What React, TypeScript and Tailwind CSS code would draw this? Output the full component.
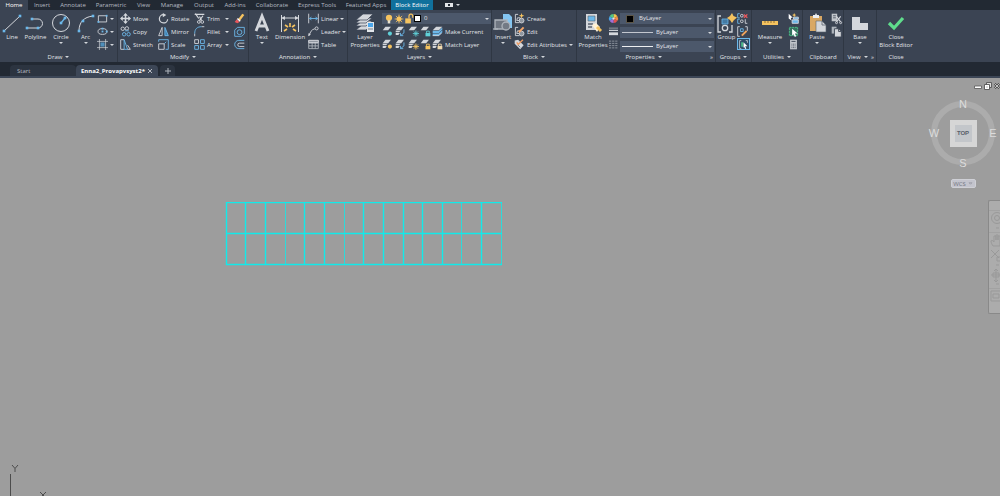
import { type ReactNode } from 'react'
import clsx from 'clsx'

const BLUE = '#6cb8ea'
const GREY = '#d4d7dc'
const GOLD = '#f5c35f'
const TEAL = '#5fd0d8'

interface IconProps {
  children: ReactNode
  className?: string
  box?: number
}

function Icon({ children, className = 'size-[11px]', box = 16 }: IconProps) {
  return (
    <svg
      viewBox={`0 0 ${box} ${box}`}
      className={clsx('shrink-0 overflow-visible', className)}
      fill="none"
      stroke={GREY}
      strokeWidth={1.3}
      aria-hidden="true"
    >
      {children}
    </svg>
  )
}

function Caret({ className }: { className?: string }) {
  return (
    <svg viewBox="0 0 4 2" className={clsx('w-1 h-[2px] shrink-0', className)} fill="#d4d7dc" aria-hidden="true">
      <path d="M0 0h4L2 2z" />
    </svg>
  )
}

/* ---------- small icons, 16 unit box ---------- */

const dot = (x: number, y: number) => <rect key={`${x}-${y}`} x={x - 1.3} y={y - 1.3} width="2.6" height="2.6" fill={BLUE} stroke="none" />

const RectIcon = () => <Icon><path d="M2 4h12v9H2z" />{dot(2, 13)}{dot(14, 4)}</Icon>
const EllipseIcon = () => <Icon><ellipse cx="8" cy="8" rx="6.5" ry="4.2" />{dot(8, 8)}{dot(8, 3.8)}{dot(14, 8)}</Icon>
const HatchIcon = () => <Icon><path d="M3.500 0v16M12.500 0v16M0 3.500h16M0 12.500h16" strokeWidth="1" /><path d="M5 5h6v6H5z" fill="#4f8fbb" stroke="none" /></Icon>
const MoveIcon = () => (
  <Icon><path d="M8 2v12M2 8h12" strokeWidth="2.200" /><path d="M8 0l3.500 4h-7zM8 16l3.500-4h-7zM0 8l4-3.500v7zM16 8l-4-3.500v7z" fill={GREY} stroke="none" /></Icon>
)
const CopyIcon = () => (
  <Icon><circle cx="4" cy="4" r="2.500" /><circle cx="10" cy="3.500" r="2.500" /><circle cx="6" cy="12" r="2.500" stroke={BLUE} /><circle cx="12.500" cy="12" r="2.500" stroke={BLUE} /><path d="M7 7h6" stroke={BLUE} /></Icon>
)
const StretchIcon = () => <Icon><path d="M6 1H1v14h5" /><path d="M6 15V1l5 14z" stroke={BLUE} /><path d="M11 9l4 6h-4" /></Icon>
const RotateIcon = () => <Icon><path d="M8 2.500A6 6 0 1 0 14 9" strokeWidth="1.800" /><path d="M7 0l5 3-5 3z" fill={GREY} stroke="none" /></Icon>
const MirrorIcon = () => <Icon><path d="M6 2v12H1z" /><path d="M10 2v12h5z" stroke={BLUE} fill="#3f7fb0" /></Icon>
const ScaleIcon = () => <Icon><path d="M1 4V1h14v14h-4" stroke={BLUE} /><path d="M1 7h8v8H1z" /><path d="M9 7l3-3" stroke={BLUE} /></Icon>
const TrimIcon = () => (
  <Icon><path d="M1 2h14M8 5l3 6M13 4L8 11" strokeWidth="1.800" /><path d="M2 1l5 7" strokeWidth="1.800" /><circle cx="7" cy="13" r="2" /><circle cx="12" cy="13" r="2" /></Icon>
)
const FilletIcon = () => <Icon><path d="M1 15v-4M11 1h4" /><path d="M1 11C1 4 5 1 11 1" stroke={BLUE} /></Icon>
const ArrayIcon = () => (
  <Icon><path d="M1 1h5.500v5.500H1z" /><path d="M9.500 1H15v5.500H9.500zM1 9.500h5.500V15H1zM9.500 9.500H15V15H9.500z" stroke={BLUE} /></Icon>
)
const EraseIcon = () => (
  <Icon><path d="M6 9l6-8 3 2-6 8z" fill={GOLD} stroke="none" /><path d="M4 9l4 4-3 2-4-2z" fill="#e9575c" stroke="none" /><path d="M5 8l4 4" stroke="#fff" strokeWidth="2" /></Icon>
)
const ExplodeIcon = () => <Icon><path d="M1 6l4-4h10v9l-4 4H1z" stroke={BLUE} /><circle cx="8" cy="9" r="3.500" stroke={BLUE} /></Icon>
const OffsetIcon = () => <Icon><path d="M15 2H7a6 6 0 0 0 0 12h8" stroke={BLUE} /><path d="M15 6H8a2.500 2.500 0 0 0 0 5h7" /></Icon>
const LinearIcon = () => <Icon><path d="M1 1v14M15 1v14" /><path d="M3 8h10M5 6L2 8l3 2M11 6l3 2-3 2" stroke={BLUE} /></Icon>
const LeaderIcon = () => <Icon><path d="M2 14C3 9 5 5 10 4" /><circle cx="12.500" cy="3.500" r="2.200" /><path d="M0 15l1-5 3 2z" fill={GREY} stroke="none" /></Icon>
const TableIcon = () => <Icon><path d="M1 2h14v12H1zM1 6h14M1 10h14M6 3v11M10.500 3v11" stroke="#aeb4bc" /><path d="M1 2h14v3H1z" fill="#8f969f" /></Icon>

function LayerIcon({ accent, shape, stacked }: { accent: string; shape: 'dot' | 'arrow' | 'lock' | 'sun'; stacked?: boolean }) {
  return (
    <Icon>
      <path d="M5 1h8L9 6H1z" fill={GREY} stroke="none" />
      {stacked && <path d="M1 7h7l-2 2H1zM1 10h6l-2 3H1z" fill={GREY} stroke="none" />}
      {shape === 'dot' && <circle cx="11.5" cy="11" r="3" fill={accent} stroke="none" />}
      {shape === 'arrow' && <path d="M13 5v5l-5 4M8 10v4h4" stroke={accent} />}
      {shape === 'lock' && <><path d="M8 10h7v5H8z" fill={accent} stroke="none" /><path d="M9.500 10V7.500h4V10" stroke={accent} /></>}
      {shape === 'sun' && <path d="M11.500 6.500v9M7 11h9M8.500 8l6 6M14.500 8l-6 6" stroke={accent} />}
    </Icon>
  )
}

const LayerStackIcon = ({ color }: { color: string }) => (
  <Icon><path d="M6 1h9l-5 5H1z" fill={GREY} stroke="none" /><path d="M1 7h9l5-5v3l-5 5H1zM1 11h9l5-5v3l-5 5H1z" fill={color} stroke="none" /><path d="M1 14h9l4-4" /></Icon>
)
const BulbIcon = () => <Icon className="size-[10px]"><circle cx="8" cy="6" r="5" fill={GOLD} stroke="none" /><path d="M6 10h4v5H6z" fill="#e8e0cc" stroke="none" /></Icon>
const SunIcon = () => <Icon className="size-[10px]"><circle cx="8" cy="8" r="4" fill={GOLD} stroke="none" /><path d="M8 1v14M1 8h14M3 3l10 10M13 3L3 13" stroke={GOLD} /></Icon>
const UnlockIcon = () => <Icon className="size-[10px]"><path d="M2 7h9v8H2z" fill={GOLD} stroke="none" /><path d="M8 7V3a3 3 0 0 1 6 0v3" stroke={GOLD} strokeWidth="2" /></Icon>

const BlockIcon = ({ pencil }: { pencil?: boolean }) => (
  <Icon>
    <path d="M2 2v12h6M2 2h4M4 11h5V7H5z" /><circle cx="11" cy="11" r="3.500" fill="#8f969f" />
    {pencil
      ? <path d="M6 8l7-7 2 2-7 7z" fill="#f3a66a" stroke="none" />
      : <path d="M11 0l1 3 3 1-3 1-1 3-1-3-3-1 3-1z" fill={GOLD} stroke="none" />}
  </Icon>
)
const AttributeIcon = () => <Icon><path d="M1 2l5-1 8 8-5 6-8-8z" fill={GREY} stroke="none" /><path d="M4 5l2 3 7-7" stroke="#ef9c62" strokeWidth="2" /><path d="M6 9l3 3" stroke="#59616d" /></Icon>
const WheelIcon = () => (
  <Icon className="size-[9px]">
    <g stroke="none">
      <path d="M8 8V0a8 8 0 0 1 7 4z" fill="#f0c64a" /><path d="M8 8l7-4a8 8 0 0 1 0 8z" fill="#f08a45" />
      <path d="M8 8l7 4a8 8 0 0 1-7 4z" fill="#e2504f" /><path d="M8 8v8a8 8 0 0 1-7-4z" fill="#a26fd6" />
      <path d="M8 8l-7 4a8 8 0 0 1 0-8z" fill="#4ba5ea" /><path d="M8 8L1 4a8 8 0 0 1 7-4z" fill="#55c784" />
      <circle cx="8" cy="8" r="2" fill="#dfe3e6" />
    </g>
  </Icon>
)
const WeightIcon = () => <Icon className="size-[9px]"><path d="M0 2h16" strokeWidth="1" /><path d="M0 6h16" strokeWidth="2" /><path d="M0 12h16" strokeWidth="5" /></Icon>
const DashIcon = () => <Icon className="size-[9px]"><path d="M0 2h16M0 6h16M0 10h16M0 14h16" stroke="#a5abb4" strokeDasharray="4 1.500" /></Icon>
const UngroupIcon = () => <Icon><path d="M4 1H1v6h3M4 9H1v6h3" stroke={BLUE} /><circle cx="7" cy="4" r="2" /><circle cx="7" cy="12" r="2" /><path d="M10 2l5 5M15 2l-5 5" stroke="#e9575c" strokeWidth="2" /><path d="M12 9v6h3" /></Icon>
const GroupEditIcon = () => <Icon><path d="M4 1H1v14h3" /><path d="M12 1h3v6" /><path d="M5 4h4v4H5z" stroke={BLUE} /><path d="M6 13l7-7 2 2-7 7z" fill="#f0a55c" stroke="none" /></Icon>
const GroupSelectIcon = () => <Icon className="size-[9px]"><path d="M4 1H1v14h3M12 1h3v4" /><path d="M4 4h3v8H4z" fill="#4fc58a" stroke="none" /><path d="M8 4l7 7H11l2 4-2 1-2-4-1 2z" fill="#fff" stroke="none" /></Icon>
const QuickSelectIcon = () => <Icon><path d="M1 1l6 6H4l1 4-4-3z" fill="#fff" stroke="none" /><path d="M8 6h7v3H8zM6 10h9v5H6z" fill={BLUE} stroke={GREY} /><path d="M9 0l1 2 2 1-2 1-1 2-1-2-2-1 2-1z" fill={GOLD} stroke="none" /></Icon>
const SelectAllIcon = () => <Icon><path d="M2 2h12v12H2z" stroke="#4fc58a" strokeDasharray="3 1" fill="#36725f" /><path d="M6 4l8 7h-4l2 4-2 1-2-4-2 2z" fill="#fff" stroke="none" /></Icon>
const CalculatorIcon = () => <Icon><path d="M3 1h10v14H3z" fill="#c2c6cc" stroke="none" /><path d="M5 3.500h6" stroke="#4b5462" strokeWidth="1.500" /><path d="M5 7.500h6M5 10h6M5 12.500h6" stroke="#4b5462" strokeWidth="1.200" strokeDasharray="1.400 0.900" /></Icon>
const CutIcon = () => <Icon><path d="M1 1h8v11H1z" fill="#c2c6cc" stroke="none" /><path d="M3 4h4M3 7h4" stroke="#4b5462" /><path d="M8 5l6 8M14 5l-6 8" strokeWidth="1.600" /><circle cx="8" cy="14" r="1.500" /><circle cx="14" cy="14" r="1.500" /></Icon>
const CopyClipIcon = () => <Icon><path d="M1 1h7v10H1z" fill="#aeb4bc" stroke="none" /><path d="M5 4h6l4 4v8H5z" fill={GREY} stroke="#3b4453" /><path d="M11 4v4h4" stroke="#3b4453" /></Icon>

/* ---------- large icons, 20 unit box ---------- */

function Large({ children }: { children: ReactNode }) {
  return <Icon box={20} className="size-[20px]">{children}</Icon>
}

const big = {
  line: <Large><path d="M2 18L18 3" strokeWidth="1" />{dot(2, 18)}{dot(18, 3)}</Large>,
  polyline: <Large><path d="M1 15h11a4.500 4.500 0 0 0 0-9H6" strokeWidth="1" />{dot(1, 15)}{dot(12, 15)}{dot(6, 6)}</Large>,
  circle: <Large><circle cx="10" cy="10" r="8.500" strokeWidth="1" /><path d="M10 10l4-5" stroke={BLUE} />{dot(10, 10)}{dot(14, 5)}</Large>,
  arc: <Large><path d="M3 18C3 9 8 4 17 3" strokeWidth="1" />{dot(3, 18)}{dot(7, 8)}{dot(17, 3)}</Large>,
  text: <Large><path d="M4 18L10 3l6 15M6 13h8" strokeWidth="2.800" /></Large>,
  dimension: <Large><path d="M1.500 2v17M18.500 2v17M3 5h14" strokeWidth="1" /><path d="M1 5l4-2v4zM19 5l-4-2v4z" fill={GREY} stroke="none" /><path d="M4 18l3-2M5 12l3 2M10 10v4M15 12l-3 2M16 18l-3-2" stroke={GOLD} strokeWidth="1.600" /></Large>,
  layers: (
    <Large>
      <g fill={GREY} stroke="#3b4453" strokeWidth="0.700"><path d="M1 17l6-5h10l-6 5z" /><path d="M1 13l6-5h10l-6 5z" /><path d="M1 10l6-5h10l-6 5z" /><path d="M1 7l7-6h10l-6 6z" /></g>
      <path d="M12 9h7v10h-7z" fill="#e2e6ea" stroke="none" /><path d="M13 10h5v4h-5z" fill="#4ba5ea" stroke="none" /><path d="M13 16h5" stroke="#8f969f" />
    </Large>
  ),
  insert: (
    <Large>
      <path d="M10 1h6l3 3v11h-9z" fill="#83c5f2" stroke="none" /><path d="M2 7h12v9H2z" fill="#6f7681" stroke="#aeb4bc" /><circle cx="13" cy="13" r="4" fill="#737a85" stroke="#aeb4bc" /><path d="M0 16h5" stroke="#aeb4bc" />
    </Large>
  ),
  match: (
    <Large>
      <path d="M3 1h11v16H3z" fill={GREY} stroke="none" /><path d="M5 3h7v5H5z" fill="#6cb8ea" stroke="#59616d" strokeWidth="0.600" /><path d="M5 11h5M5 14h4" stroke="#59616d" />
      <path d="M9 12l4-2 4 4-3 5z" fill="#fff1d5" stroke="none" /><path d="M14 14l4 4" stroke={GOLD} strokeWidth="3" />
    </Large>
  ),
  group: (
    <Large>
      <path d="M4 3H1v16h3M12 19h3v-7" /><path d="M5 6h6v5H5z" fill="#447aa3" stroke={BLUE} strokeWidth="0.800" /><circle cx="8" cy="15" r="2.700" /><path d="M15 0l1.500 3L20 4.500 17 7l-2 3-2-3-3-2 3-2z" fill={GOLD} stroke="none" />
    </Large>
  ),
  measure: <Large><path d="M2 8h16v4H2z" fill={GOLD} stroke="none" /><path d="M5 8v2M8 8v2M11 8v2M14 8v2" stroke="#765b2e" strokeWidth="0.800" /></Large>,
  paste: (
    <Large>
      <path d="M3 3h12v15H3z" fill="#d9a864" stroke="none" /><path d="M6 2h2l1-2 1 2h2v3H6z" fill="#eef0f2" stroke="none" /><path d="M9 8h6l4 4v7H9z" fill={GREY} stroke="#59616d" strokeWidth="0.600" /><path d="M15 8v4h4" stroke="#59616d" strokeWidth="0.800" />
    </Large>
  ),
  base: <Large><path d="M2 4h8v6h8v7H2z" fill={GREY} stroke="none" /></Large>,
  close: <Large><path d="M3 10l5 5 9-10" stroke="#5fdc8c" strokeWidth="3.200" /></Large>,
}

/* ---------- ribbon building blocks ---------- */

interface BigButtonProps {
  icon: ReactNode
  label: string
  second?: string
  menu?: boolean
  className: string
}

function BigButton({ icon, label, second, menu, className }: BigButtonProps) {
  return (
    <button type="button" className={clsx('flex flex-col items-center shrink-0 leading-2 whitespace-nowrap', className)}>
      <span className="h-[21px] flex items-center">{icon}</span>
      <span>{label}</span>
      {second && <span>{second}</span>}
      {menu && <Caret className="mt-px" />}
    </button>
  )
}

function SmallButton({ icon, label, menu, name }: { icon: ReactNode; label?: string; menu?: boolean; name?: string }) {
  return (
    <button type="button" aria-label={name} className="h-[13px] w-full flex items-center gap-[2px] whitespace-nowrap">
      {icon}
      {label && <span>{label}</span>}
      {menu && <Caret className="ml-auto" />}
    </button>
  )
}

function Column({ children, className }: { children: ReactNode; className?: string }) {
  return <div className={clsx('flex flex-col shrink-0', className)}>{children}</div>
}

interface PanelProps {
  title: string
  menu?: boolean
  launcher?: boolean
  className: string
  children: ReactNode
}

function Panel({ title, menu = true, launcher, className, children }: PanelProps) {
  return (
    <section aria-label={title} className={clsx('flex flex-col shrink-0 pt-[2px] border-r border-[#2f3743]', className)}>
      <div className="flex h-10">{children}</div>
      <div className="flex items-center justify-center h-[10px] whitespace-nowrap">
        <button type="button" className={clsx('flex items-center gap-[3px]', launcher && 'ml-auto')}>
          {title}
          {menu && <Caret />}
        </button>
        {launcher && <button type="button" aria-label={`${title} settings`} className="ml-auto pr-[2px]">»</button>}
      </div>
    </section>
  )
}

function Combo({ name, value, children }: { name: string; value: string; children?: ReactNode }) {
  return (
    <div className="relative flex items-center gap-[3px] h-[11px] my-px pl-[2px] bg-[#4c586b]">
      {children}
      <select aria-label={name} className="appearance-none flex-1 min-w-0 h-[11px] leading-[11px] bg-transparent outline-none">
        <option>{value}</option>
      </select>
      <Caret className="absolute right-[2px] top-[5px] pointer-events-none" />
    </div>
  )
}

const tabs = [
  { label: 'Home', width: 'w-7' },
  { label: 'Insert', width: 'w-7' },
  { label: 'Annotate', width: 'w-[34px]' },
  { label: 'Parametric', width: 'w-[42px]' },
  { label: 'View', width: 'w-[23px]' },
  { label: 'Manage', width: 'w-[34px]' },
  { label: 'Output', width: 'w-[30px]' },
  { label: 'Add-ins', width: 'w-8' },
  { label: 'Collaborate', width: 'w-[42px]' },
  { label: 'Express Tools', width: 'w-12' },
  { label: 'Featured Apps', width: 'w-[50px]' },
  { label: 'Block Editor', width: 'w-[42px]' },
]

function RibbonTabs() {
  return (
    <nav className="flex h-[10px] bg-[#222933] text-[#b5bac2]">
      {tabs.map((tab) => (
        <button
          key={tab.label}
          type="button"
          className={clsx(
            'shrink-0 whitespace-nowrap flex items-center justify-center',
            tab.width,
            tab.label === 'Home' && 'bg-[#3b4453] text-white',
            tab.label === 'Block Editor' && 'bg-[#10709c] text-white',
          )}
        >
          {tab.label}
        </button>
      ))}
      <button type="button" aria-label="Ribbon display" className="ml-3 flex items-center gap-[3px]">
        <span className="w-2 h-1 bg-[#e2e4e7] flex items-center justify-center"><span className="size-[2px] bg-[#222933]" /></span>
        <Caret />
      </button>
    </nav>
  )
}

function Ribbon() {
  return (
    <div className="flex bg-[#3b4453] text-[#e2e5e9] overflow-hidden">
      <Panel title="Draw" className="w-[118px]">
        <BigButton icon={big.line} label="Line" className="w-6" />
        <BigButton icon={big.polyline} label="Polyline" className="w-[23px]" />
        <BigButton icon={big.circle} label="Circle" menu className="w-7" />
        <BigButton icon={big.arc} label="Arc" menu className="w-[21px]" />
        <Column className="w-[17px] ml-px">
          <SmallButton icon={<RectIcon />} name="Rectangle" menu />
          <SmallButton icon={<EllipseIcon />} name="Ellipse" menu />
          <SmallButton icon={<HatchIcon />} name="Hatch" menu />
        </Column>
      </Panel>
      <Panel title="Modify" className="w-[131px]">
        <Column className="w-[38px] ml-[2px]">
          <SmallButton icon={<MoveIcon />} label="Move" />
          <SmallButton icon={<CopyIcon />} label="Copy" />
          <SmallButton icon={<StretchIcon />} label="Stretch" />
        </Column>
        <Column className="w-9">
          <SmallButton icon={<RotateIcon />} label="Rotate" />
          <SmallButton icon={<MirrorIcon />} label="Mirror" />
          <SmallButton icon={<ScaleIcon />} label="Scale" />
        </Column>
        <Column className="w-[35px]">
          <SmallButton icon={<TrimIcon />} label="Trim" menu />
          <SmallButton icon={<FilletIcon />} label="Fillet" menu />
          <SmallButton icon={<ArrayIcon />} label="Array" menu />
        </Column>
        <Column className="ml-[5px]">
          <SmallButton icon={<EraseIcon />} name="Erase" />
          <SmallButton icon={<ExplodeIcon />} name="Explode" />
          <SmallButton icon={<OffsetIcon />} name="Offset" />
        </Column>
      </Panel>
      <Panel title="Annotation" className="w-[99px]">
        <BigButton icon={big.text} label="Text" menu className="w-[26px]" />
        <BigButton icon={big.dimension} label="Dimension" className="w-[30px]" />
        <Column className="w-9 ml-[3px]">
          <SmallButton icon={<LinearIcon />} label="Linear" menu />
          <SmallButton icon={<LeaderIcon />} label="Leader" menu />
          <SmallButton icon={<TableIcon />} label="Table" />
        </Column>
      </Panel>
      <Panel title="Layers" className="w-[144px]">
        <BigButton icon={big.layers} label="Layer" second="Properties" className="w-[34px]" />
        <Column className="w-[109px]">
          <Combo name="Layer" value="0">
            <span className="flex items-center">
              <BulbIcon />
              <SunIcon />
              <UnlockIcon />
              <span className="size-[7px] bg-white border border-black" />
            </span>
          </Combo>
          <div className="flex h-[13px]">
            <Column className="w-[13px]"><SmallButton name="Off" icon={<LayerIcon accent={TEAL} shape="dot" />} /></Column>
            <Column className="w-[13px]"><SmallButton name="Isolate" icon={<LayerIcon accent={BLUE} shape="arrow" stacked />} /></Column>
            <Column className="w-[12px]"><SmallButton name="Freeze" icon={<LayerIcon accent={TEAL} shape="sun" />} /></Column>
            <Column className="w-[12px]"><SmallButton name="Lock" icon={<LayerIcon accent={TEAL} shape="lock" />} /></Column>
            <SmallButton icon={<LayerStackIcon color={BLUE} />} label="Make Current" />
          </div>
          <div className="flex h-[13px]">
            <Column className="w-[13px]"><SmallButton name="Turn all on" icon={<LayerIcon accent={GOLD} shape="dot" stacked />} /></Column>
            <Column className="w-[13px]"><SmallButton name="Unisolate" icon={<LayerIcon accent={BLUE} shape="arrow" stacked />} /></Column>
            <Column className="w-[12px]"><SmallButton name="Thaw all" icon={<LayerIcon accent={GOLD} shape="sun" stacked />} /></Column>
            <Column className="w-[12px]"><SmallButton name="Unlock" icon={<LayerIcon accent={GOLD} shape="lock" />} /></Column>
            <SmallButton icon={<LayerIcon accent="#f0d9ad" shape="lock" stacked />} label="Match Layer" />
          </div>
        </Column>
      </Panel>
      <Panel title="Block" className="w-[85px]">
        <BigButton icon={big.insert} label="Insert" menu className="w-[22px]" />
        <Column className="w-[59px]">
          <SmallButton icon={<BlockIcon />} label="Create" />
          <SmallButton icon={<BlockIcon pencil />} label="Edit" />
          <SmallButton icon={<AttributeIcon />} label="Edit Attributes" menu />
        </Column>
      </Panel>
      <Panel title="Properties" launcher className="w-[139px]">
        <BigButton icon={big.match} label="Match" second="Properties" className="w-8" />
        <Column className="w-[11px]">
          <SmallButton icon={<WheelIcon />} name="Object color" />
          <SmallButton icon={<WeightIcon />} name="Lineweight" />
          <SmallButton icon={<DashIcon />} name="Linetype" />
        </Column>
        <Column className="w-[94px] gap-px">
          <Combo name="Color" value="ByLayer">
            <span className="size-2 ml-1 mr-[2px] bg-black border border-[#5c5648]" />
          </Combo>
          <Combo name="Weight" value="ByLayer"><span className="w-[31px] h-px bg-[#c3c7cf]" /></Combo>
          <Combo name="Type" value="ByLayer"><span className="w-[31px] h-px bg-[#eceef0]" /></Combo>
        </Column>
      </Panel>
      <Panel title="Groups" className="w-9">
        <BigButton icon={big.group} label="Group" className="w-[21px]" />
        <Column className="w-[13px]">
          <SmallButton icon={<UngroupIcon />} name="Ungroup" />
          <SmallButton icon={<GroupEditIcon />} name="Group edit" />
          <button type="button" aria-label="Group selection" className="flex items-center justify-center h-3 border border-[#6cb8ea] bg-[#2f4d68]">
            <GroupSelectIcon />
          </button>
        </Column>
      </Panel>
      <Panel title="Utilities" className="w-[51px]">
        <BigButton icon={big.measure} label="Measure" menu className="w-9" />
        <Column>
          <SmallButton icon={<QuickSelectIcon />} name="Quick select" />
          <SmallButton icon={<SelectAllIcon />} name="Select all" />
          <SmallButton icon={<CalculatorIcon />} name="Calculator" />
        </Column>
      </Panel>
      <Panel title="Clipboard" menu={false} className="w-[41px]">
        <BigButton icon={big.paste} label="Paste" menu className="w-7" />
        <Column>
          <SmallButton icon={<CutIcon />} name="Cut" />
          <SmallButton icon={<CopyClipIcon />} name="Copy clip" />
        </Column>
      </Panel>
      <Panel title="View" launcher className="w-[33px]">
        <BigButton icon={big.base} label="Base" menu className="w-8" />
      </Panel>
      <Panel title="Close" menu={false} className="w-[38px] border-r-0">
        <BigButton icon={big.close} label="Close" second="Block Editor" className="w-[38px]" />
      </Panel>
    </div>
  )
}

function FileTabs() {
  return (
    <div className="flex items-end h-4 px-[10px] bg-[#222933] border-b-2 border-[#3c4656] text-[#b5bac2]">
      <button type="button" className="h-[11px] w-[66px] pl-[7px] text-left rounded-t-[4px] bg-[#2c3440]">Start</button>
      <div className="h-[11px] w-[82px] pl-[5px] pr-[6px] flex items-center justify-between rounded-t-[4px] bg-[#3c4656] text-white">
        <button type="button" className="font-bold whitespace-nowrap">Enna2_Provapvsyst2*</button>
        <button type="button" aria-label="Close file"><Icon className="size-1" box={4}><path d="M0 0l4 4M4 0L0 4" strokeWidth="0.800" /></Icon></button>
      </div>
      <button type="button" aria-label="New file" className="h-[11px] w-[15px] ml-[2px] flex items-center justify-center rounded-t-[4px] bg-[#2c3440]">
        <Icon className="size-[6px]" box={6}><path d="M3 0v6M0 3h6" stroke="#aeb4bc" strokeWidth="1" /></Icon>
      </button>
    </div>
  )
}

const columns = [1, 20, 40, 60, 79, 99, 119, 138, 158, 178, 197, 217, 236, 256, 276]
const faint = [60, 119, 236, 276]

function Drawing() {
  return (
    <svg className="absolute left-[225px] top-[124px] w-[278px] h-[65px]" viewBox="0 0 278 65" stroke="#12eaea" role="img" aria-label="Block geometry">
      {columns.map((x) => (
        <path key={x} d={`M${x + 0.5} 0v63`} strokeWidth={faint.includes(x) ? 1 : 1.4} opacity={faint.includes(x) ? 0.8 : 1} />
      ))}
      <path d="M1 .5h276M1 31.500h276M1 62.500h276" strokeWidth="1.400" />
    </svg>
  )
}

function ViewCube() {
  return (
    <div className="absolute right-0 top-[18px] w-[74px]">
      <svg viewBox="0 0 74 74" className="w-full" fontFamily="Liberation Sans, sans-serif" fontSize="11" textAnchor="middle" fill="#dcdcdc">
        <circle cx="37" cy="37" r="29" fill="none" stroke="#acacac" strokeWidth="6" />
        <path d="M24 24h27v27H24z" fill="#d6d6d6" />
        <path d="M29 29h17v17H29z" fill="#c3c6ca" />
        <text x="37" y="12">N</text>
        <text x="37" y="71">S</text>
        <text x="8" y="41">W</text>
        <text x="67" y="41">E</text>
        <text x="37" y="39" fontSize="6" fontWeight="bold" fill="#596069">TOP</text>
      </svg>
      <button type="button" className="mx-auto mt-[9px] w-[25px] h-[9px] flex items-center justify-center gap-[2px] rounded-[2px] bg-[#c3c4cd] border border-[#cfd0d6] text-[#747682]">
        WCS
        <svg viewBox="0 0 6 4" className="w-[5px] h-[3px]" fill="#c3c4cd" stroke="#8f919b" strokeWidth="0.800" aria-hidden="true"><path d="M1 1h4L3 3z" /></svg>
      </button>
    </div>
  )
}

function NavigationBar() {
  return (
    <div className="absolute right-0 top-[122px] w-3 h-[114px] overflow-hidden rounded-l-[2px] border border-r-0 border-[#898989] bg-[#acacac]">
      <svg viewBox="0 0 12 114" className="w-3 h-[114px]" fill="none" stroke="#999999" aria-hidden="true">
        <path d="M0 9.500h12M0 31.500h12M0 87.500h12" stroke="#a2a2a2" />
        <circle cx="8" cy="17" r="5.500" /><circle cx="8" cy="17" r="2.500" />
        <path d="M7 27h3M7 64h3M7 83h3" />
        <path d="M4 45c-4-6-1-7 1-4v-6h2v4-5h2v5-4h2v10z" />
        <path d="M2 49l8 8M10 49l-8 8M8 56h4v4H8z" />
        <path d="M7 68v13M2 74h10M5 70l2-2 2 2M5 79l2 2 2-2M4 72v4h6v-4z" />
        <path d="M2 90h10v10H2zM4 93h6v4H4z" />
      </svg>
    </div>
  )
}

function WindowControls() {
  return (
    <div className="absolute right-0 top-1 flex items-center gap-[2px]">
      <button type="button" aria-label="Minimize"><Icon className="size-2" box={8}><path d="M.5 4h7v2.500h-7z" fill="#fff" stroke="#555" strokeWidth="0.800" /></Icon></button>
      <button type="button" aria-label="Restore"><Icon className="size-2" box={8}><path d="M2.500 .5h5v5h-5z" fill="#ddd" stroke="#555" strokeWidth="0.900" /><path d="M.5 2.500h5v5h-5z" fill="#fff" stroke="#555" strokeWidth="0.900" /><path d="M2.500 5h1" stroke="#555" strokeWidth="0.800" /></Icon></button>
      <button type="button" aria-label="Close drawing"><Icon className="w-[6px] h-2" box={8}><path d="M1 1l6 6M7 1L1 7" stroke="#444" strokeWidth="2.600" /><path d="M1 1l6 6M7 1L1 7" stroke="#eee" strokeWidth="1" /></Icon></button>
    </div>
  )
}

function UcsIcon() {
  return (
    <svg className="absolute left-0 bottom-0 w-[60px] h-9" viewBox="0 0 60 36" fill="none" stroke="#4c4c4c" strokeWidth="1" aria-label="UCS axes" role="img">
      <path d="M10.500 14v22" />
      <path d="M12 5l3 3.500L18 5M15 8.500V12" />
      <path d="M40 32l6 6M46 32l-6 6" />
    </svg>
  )
}

export default function App() {
  return (
    <div className="min-h-screen flex flex-col font-['Open_Sans','Noto_Sans',sans-serif] text-[6px] leading-2 font-medium bg-[#9d9d9d]">
      <RibbonTabs />
      <Ribbon />
      <FileTabs />
      <main className="relative flex-1 min-h-80 overflow-hidden">
        <Drawing />
        <WindowControls />
        <ViewCube />
        <NavigationBar />
        <UcsIcon />
      </main>
    </div>
  )
}
